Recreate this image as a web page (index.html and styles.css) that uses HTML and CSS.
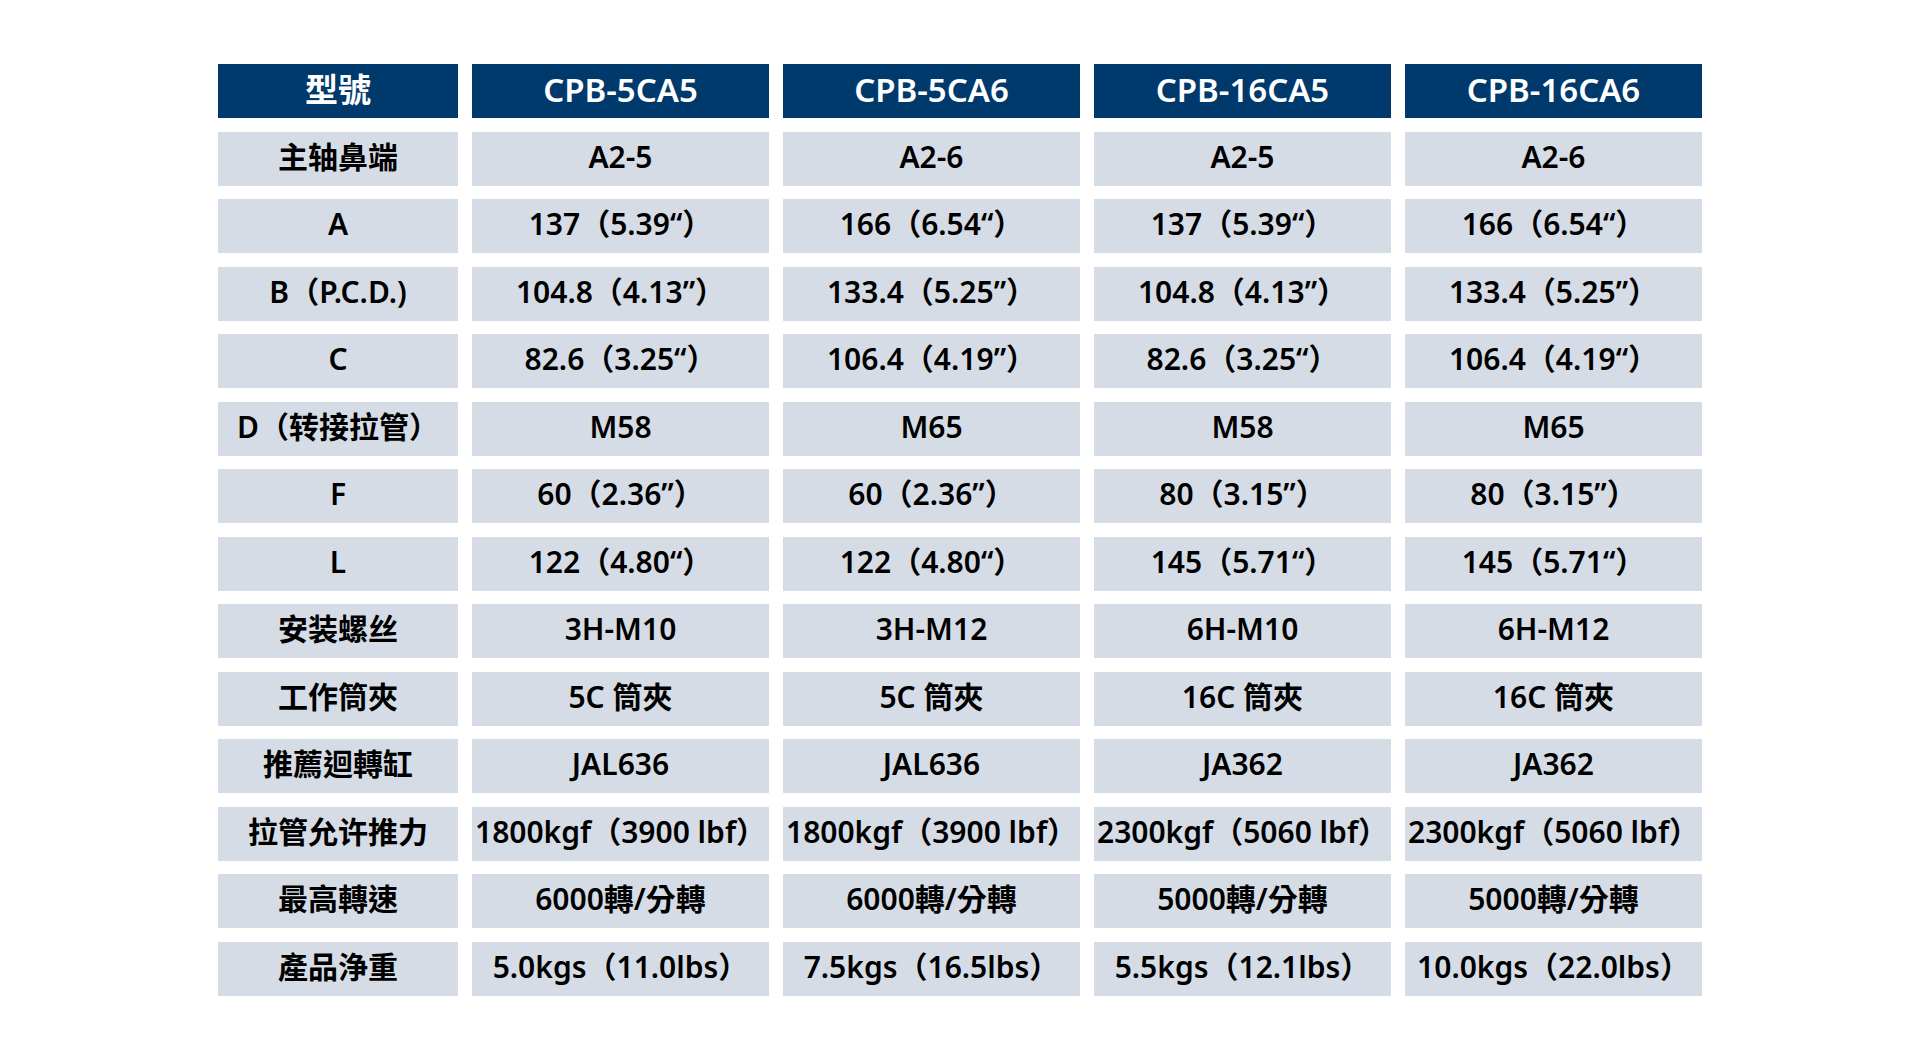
FILE: index.html
```html
<!DOCTYPE html>
<html lang="zh-Hant">
<head>
<meta charset="utf-8">
<title>規格表</title>
<link rel="stylesheet" href="styles.css">
</head>
<body>
<div class="spec">
  <div class="cell head">型號</div>
  <div class="cell head">CPB-5CA5</div>
  <div class="cell head">CPB-5CA6</div>
  <div class="cell head">CPB-16CA5</div>
  <div class="cell head">CPB-16CA6</div>

  <div class="cell">主轴鼻端</div>
  <div class="cell">A2-5</div>
  <div class="cell">A2-6</div>
  <div class="cell">A2-5</div>
  <div class="cell">A2-6</div>

  <div class="cell">A</div>
  <div class="cell">137（5.39“）</div>
  <div class="cell">166（6.54“）</div>
  <div class="cell">137（5.39“）</div>
  <div class="cell">166（6.54“）</div>

  <div class="cell">B（P.C.D.)</div>
  <div class="cell">104.8（4.13”）</div>
  <div class="cell">133.4（5.25”）</div>
  <div class="cell">104.8（4.13”）</div>
  <div class="cell">133.4（5.25”）</div>

  <div class="cell">C</div>
  <div class="cell">82.6（3.25“）</div>
  <div class="cell">106.4（4.19”）</div>
  <div class="cell">82.6（3.25“）</div>
  <div class="cell">106.4（4.19“）</div>

  <div class="cell">D（转接拉管）</div>
  <div class="cell">M58</div>
  <div class="cell">M65</div>
  <div class="cell">M58</div>
  <div class="cell">M65</div>

  <div class="cell">F</div>
  <div class="cell">60（2.36”）</div>
  <div class="cell">60（2.36”）</div>
  <div class="cell">80（3.15”）</div>
  <div class="cell">80（3.15”）</div>

  <div class="cell">L</div>
  <div class="cell">122（4.80“）</div>
  <div class="cell">122（4.80“）</div>
  <div class="cell">145（5.71“）</div>
  <div class="cell">145（5.71“）</div>

  <div class="cell">安装螺丝</div>
  <div class="cell">3H-M10</div>
  <div class="cell">3H-M12</div>
  <div class="cell">6H-M10</div>
  <div class="cell">6H-M12</div>

  <div class="cell">工作筒夾</div>
  <div class="cell">5C 筒夾</div>
  <div class="cell">5C 筒夾</div>
  <div class="cell">16C 筒夾</div>
  <div class="cell">16C 筒夾</div>

  <div class="cell">推薦迴轉缸</div>
  <div class="cell">JAL636</div>
  <div class="cell">JAL636</div>
  <div class="cell">JA362</div>
  <div class="cell">JA362</div>

  <div class="cell">拉管允许推力</div>
  <div class="cell">1800kgf（3900 lbf）</div>
  <div class="cell">1800kgf（3900 lbf）</div>
  <div class="cell">2300kgf（5060 lbf）</div>
  <div class="cell">2300kgf（5060 lbf）</div>

  <div class="cell">最高轉速</div>
  <div class="cell">6000轉/分轉</div>
  <div class="cell">6000轉/分轉</div>
  <div class="cell">5000轉/分轉</div>
  <div class="cell">5000轉/分轉</div>

  <div class="cell">產品浄重</div>
  <div class="cell">5.0kgs（11.0lbs）</div>
  <div class="cell">7.5kgs（16.5lbs）</div>
  <div class="cell">5.5kgs（12.1lbs）</div>
  <div class="cell">10.0kgs（22.0lbs）</div>
</div>
</body>
</html>
```

FILE: styles.css
```css
html, body {
  margin: 0;
  padding: 0;
  background: #ffffff;
}

body {
  font-family: "Noto Sans", "Noto Sans CJK TC", "Noto Sans CJK SC", sans-serif;
  color: #000000;
}

.spec {
  display: grid;
  grid-template-columns: 240px repeat(4, 297px);
  grid-auto-rows: 54px;
  column-gap: 14px;
  row-gap: 13.5px;
  margin: 64px 0 0 218px;
  width: max-content;
}

.cell {
  display: flex;
  align-items: center;
  justify-content: center;
  background: #d6dce5;
  font-size: 30px;
  font-weight: 600;
  white-space: nowrap;
  line-height: 1;
  padding-bottom: 4px;
  box-sizing: border-box;
}

.head {
  background: #003a6d;
  color: #ffffff;
  font-size: 33px;
  font-weight: 600;
}
```
